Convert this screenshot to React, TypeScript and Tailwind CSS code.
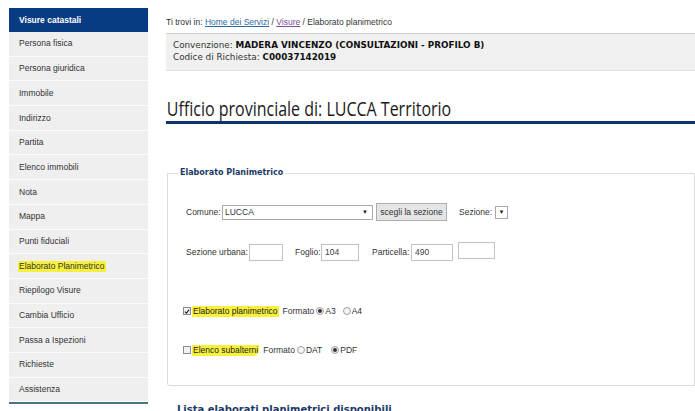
import React from "react";

const items = [
  "Persona fisica",
  "Persona giuridica",
  "Immobile",
  "Indirizzo",
  "Partita",
  "Elenco immobili",
  "Nota",
  "Mappa",
  "Punti fiduciali",
  "Elaborato Planimetrico",
  "Riepilogo Visure",
  "Cambia Ufficio",
  "Passa a Ispezioni",
  "Richieste",
  "Assistenza",
];

function Radio({ checked }: { checked?: boolean }) {
  return (
    <span className="inline-flex w-[8px] h-[8px] rounded-full border border-[#a0a0a0] bg-[#f4f4f4] items-center justify-center">
      {checked && <span className="w-[4px] h-[4px] rounded-full bg-[#333]" />}
    </span>
  );
}

function Checkbox({ checked }: { checked?: boolean }) {
  return (
    <span className="inline-flex w-[8px] h-[8px] border border-[#8a8a8a] bg-[#f2f2f2] items-center justify-center">
      {checked && (
        <svg width="7" height="7" viewBox="0 0 7 7">
          <path d="M1 3.6 L2.8 5.4 L6 1.4" fill="none" stroke="#222" strokeWidth="1.3" />
        </svg>
      )}
    </span>
  );
}

function TextBox({ w, value }: { w: string; value?: string }) {
  return (
    <span className={`inline-flex shrink-0 h-[17px] ${w} border border-[#c3c3c3] bg-white items-center pl-[3px] text-[#444]`}>
      {value}
    </span>
  );
}

export default function App() {
  return (
    <div className="w-[695px] h-[411px] overflow-hidden bg-white flex font-['Liberation_Sans',Arial,sans-serif] text-[8.5px] text-[#333]">
      {/* Sidebar */}
      <div className="ml-[9px] mt-[8px] w-[139px] shrink-0 flex flex-col">
        <div className="shrink-0 h-[24px] bg-[#073c82] text-white font-bold pl-[10px] flex items-center text-[8.5px]">
          Visure catastali
        </div>
        {items.map((it) => (
          <div
            key={it}
            className="shrink-0 h-[24.7px] bg-[#efefef] border-b border-[#fbfbfb] flex items-center pl-[9px] text-[#333]"
          >
            {it === "Elaborato Planimetrico" ? (
              <span className="bg-[#f7f03c] px-[1px] leading-[11px]">{it}</span>
            ) : (
              <span className="pl-[1px]">{it}</span>
            )}
          </div>
        ))}
        <div className="shrink-0 h-[2px] bg-[#4a7684]" />
      </div>

      {/* Main */}
      <div className="ml-[18px] flex-1 pt-[16px] flex flex-col">
        <div className="shrink-0 h-[12px] leading-[12px] text-[#333] whitespace-nowrap">
          Ti trovi in: <span className="text-[#2d6aa6] underline">Home dei Servizi</span> /{" "}
          <span className="text-[#7b4d9a] underline">Visure</span> / Elaborato planimetrico
        </div>

        <div className="shrink-0 mt-[5px] h-[38px] border-t border-[#cfcfcf] border-b border-b-[#e2e2e2] bg-[#f0f0f0] pl-[7px] pt-[5px] font-['DejaVu_Sans',Verdana,sans-serif] text-[8.8px] leading-[12px] text-[#333] whitespace-nowrap">
          <div>
            Convenzione: <span className="font-bold text-[#111]">MADERA VINCENZO (CONSULTAZIONI - PROFILO B)</span>
          </div>
          <div>
            Codice di Richiesta: <span className="font-bold text-[#111]">C00037142019</span>
          </div>
        </div>

        <div className="shrink-0 mt-[26px] h-[27px] border-b-[3px] border-[#0e3567]">
          <div className="h-[24px] leading-[24px] pl-[1px] font-['Open_Sans',sans-serif] text-[19.5px] text-[#1a1a1a] inline-block origin-left scale-x-[0.82] whitespace-nowrap">
            Ufficio provinciale di: LUCCA Territorio
          </div>
        </div>

        {/* Fieldset */}
        <div className="shrink-0 mt-[44px] ml-[1px] flex h-[10px]">
          <div className="w-[11px] h-[5px] self-end border-t border-l border-[#dcdcdc]" />
          <div className="px-[2px] leading-[10px] font-['DejaVu_Sans',Verdana,sans-serif] font-bold text-[8px] text-[#1c3a66]">
            Elaborato Planimetrico
          </div>
          <div className="flex-1 h-[5px] self-end border-t border-r border-[#dcdcdc]" />
        </div>
        <div className="shrink-0 ml-[1px] h-[208px] border-l border-r border-b border-[#dcdcdc] rounded-bl-[3px] pt-[25px] pl-[18px] flex flex-col">
          <div className="h-[18px] flex items-center whitespace-nowrap">
            <span className="w-[36px] shrink-0">Comune:</span>
            <span className="inline-flex shrink-0 h-[15px] w-[151px] border border-[#a9a9a9] bg-white items-center pl-[2px] pr-[4px] justify-between">
              <span>LUCCA</span>
              <span className="text-[6px] text-[#222]">▼</span>
            </span>
            <span className="ml-[3px] inline-flex shrink-0 h-[18px] w-[71px] border border-[#adadad] bg-[#e5e5e5] items-center justify-center">
              scegli la sezione
            </span>
            <span className="ml-[12px] w-[36px] shrink-0">Sezione:</span>
            <span className="inline-flex shrink-0 h-[13px] w-[13px] border border-[#a9a9a9] bg-white items-center justify-center text-[6px] text-[#222]">
              ▼
            </span>
          </div>

          <div className="mt-[22px] h-[18px] flex items-center whitespace-nowrap">
            <span className="w-[63px] shrink-0">Sezione urbana:</span>
            <TextBox w="w-[34px]" />
            <span className="ml-[12px] w-[26px] shrink-0">Foglio:</span>
            <TextBox w="w-[38px]" value="104" />
            <span className="ml-[13px] w-[39px] shrink-0">Particella:</span>
            <TextBox w="w-[42px]" value="490" />
            <span className="ml-[5px]"><TextBox w="w-[37px]" /></span>
          </div>

          <div className="mt-[44px] h-[12px] flex items-center whitespace-nowrap -ml-[3px]">
            <Checkbox checked />
            <span className="ml-[1px] bg-[#f7f03c] px-[1px] leading-[11px] text-[#222]">Elaborato planimetrico</span>
            <span className="ml-[4px]">Formato</span>
            <span className="ml-[2px] flex"><Radio checked /></span>
            <span className="ml-[1px]">A3</span>
            <span className="ml-[7px] flex"><Radio /></span>
            <span className="ml-[1px]">A4</span>
          </div>

          <div className="mt-[27px] h-[12px] flex items-center whitespace-nowrap -ml-[3px]">
            <Checkbox />
            <span className="ml-[1px] bg-[#f7f03c] px-[1px] leading-[11px] rounded-br-[6px] text-[#222]">Elenco subalterni</span>
            <span className="ml-[4px]">Formato</span>
            <span className="ml-[2px] flex"><Radio /></span>
            <span className="ml-[1px]">DAT</span>
            <span className="ml-[9px] flex"><Radio checked /></span>
            <span className="ml-[1px]">PDF</span>
          </div>
        </div>

        <div className="shrink-0 mt-[17px] ml-[11px] leading-[14px] font-['DejaVu_Sans',Verdana,sans-serif] font-bold text-[10px] text-[#1c3a66] whitespace-nowrap">
          Lista elaborati planimetrici disponibili
        </div>
      </div>
    </div>
  );
}
